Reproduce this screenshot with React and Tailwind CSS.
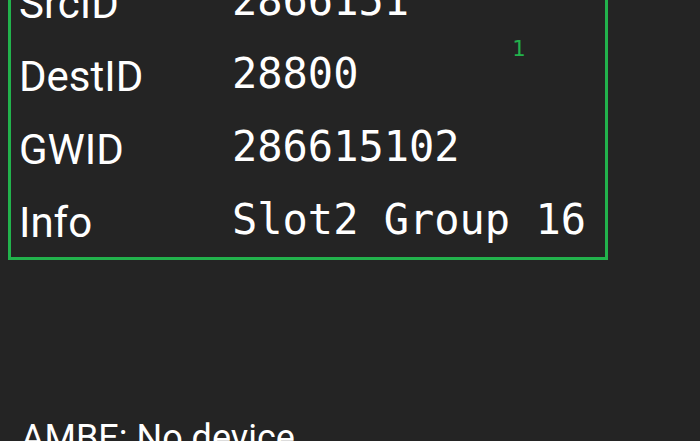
import React from 'react';

const rows = [
  { label: 'SrcID', value: '2866151' },
  { label: 'DestID', value: '28800' },
  { label: 'GWID', value: '286615102' },
  { label: 'Info', value: 'Slot2 Group 16' },
];

const App = () => {
  return (
    <div className="w-[700px] h-[441px] overflow-hidden bg-[#242424] text-white">
      {/* Call info box */}
      <div className="relative ml-[8px] -mt-[35px] w-[600px] border-[3px] border-t-0 border-[#22b24c] pl-[8px]">
        {rows.map(row => (
          <div key={row.label} className="flex h-[73px] items-start">
            <div className="w-[213px] pt-[15px] text-[42px] leading-[47px] font-['Roboto',sans-serif]">
              {row.label}
            </div>
            <div className="pt-[12px] text-[42px] leading-[47px] whitespace-pre font-['DejaVu_Sans_Mono',monospace]">
              {row.value}
            </div>
          </div>
        ))}

        {/* slot indicator */}
        <span className="absolute left-[501px] top-[71px] text-[22px] leading-[26px] text-[#22b24c] font-['DejaVu_Sans_Mono',monospace]">
          1
        </span>
      </div>

      <div className="mt-[155px] pl-[21px] text-[36px] leading-[47px] font-['Roboto',sans-serif]">
        AMBE: No device
      </div>
    </div>
  );
};

export default App;
